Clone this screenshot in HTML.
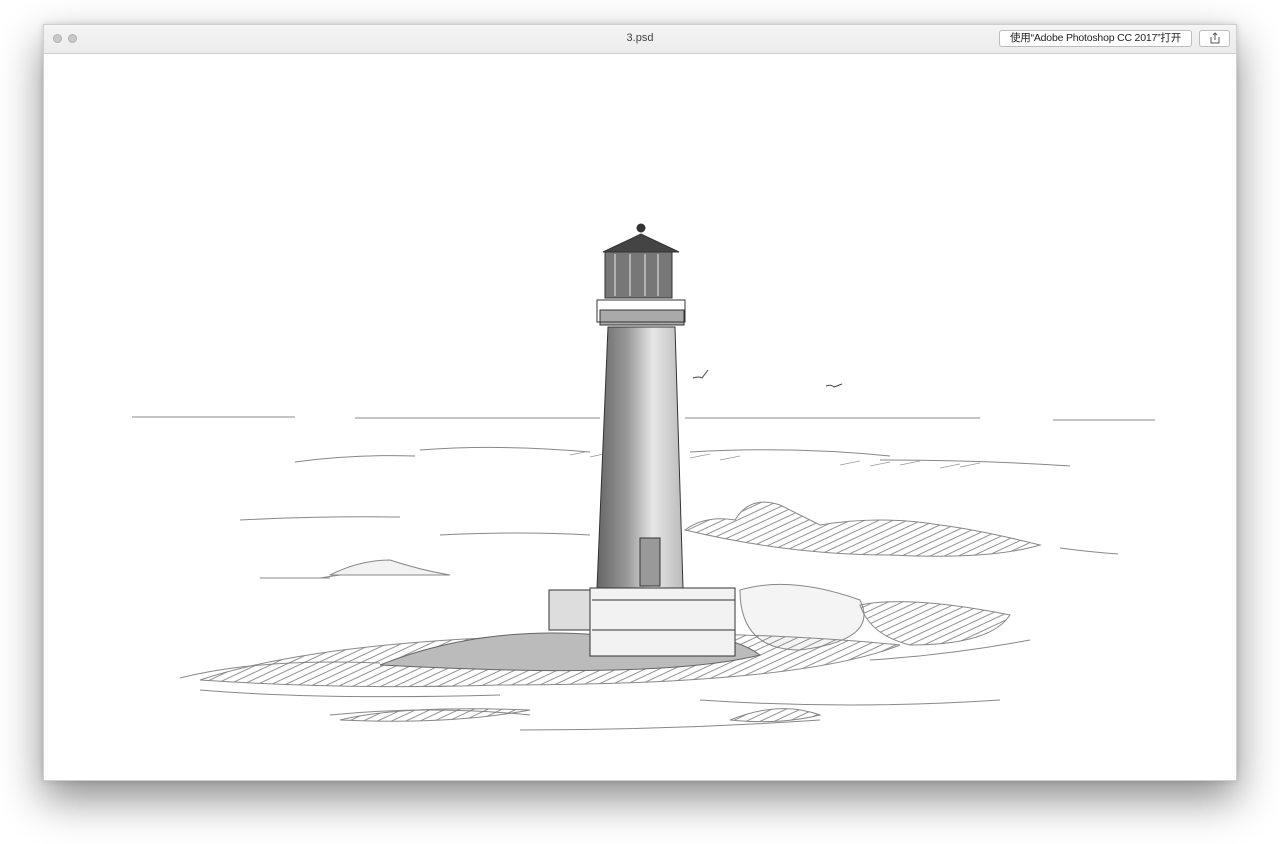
<!DOCTYPE html>
<html><head><meta charset="utf-8"><style>
html,body{margin:0;padding:0;background:#fff;width:1280px;height:844px;overflow:hidden;font-family:"Liberation Sans","Noto Sans CJK SC",sans-serif}
.win{position:absolute;left:43px;top:24px;width:1194px;height:757px;background:#fff;border:1px solid #cfcfcf;box-sizing:border-box;box-shadow:0 18px 40px rgba(0,0,0,0.45),0 0 6px rgba(0,0,0,0.15)}
.tb{position:absolute;left:0;top:0;width:100%;height:28px;background:linear-gradient(#f4f4f4,#ececec);border-bottom:1px solid #cdcdcd}
.btn{position:absolute;top:9px;width:9px;height:9px;border-radius:50%;background:#c9c9c9;border:1px solid #b0b0b0;box-sizing:border-box}
.title{position:absolute;left:0;right:0;top:7px;text-align:center;font-size:11px;color:#444}
.open{position:absolute;left:955px;top:5px;width:193px;height:17px;border:1px solid #bdbdbd;border-radius:3px;background:#fff;font-size:10.5px;line-height:15px;text-align:center;color:#222;box-sizing:border-box;letter-spacing:-0.2px}
.share{position:absolute;left:1155px;top:5px;width:31px;height:17px;border:1px solid #bdbdbd;border-radius:3px;background:#fff;box-sizing:border-box}
</style></head><body>
<div class="win">
<div class="tb">
<div class="btn" style="left:9px"></div><div class="btn" style="left:24px"></div>
<div class="title">3.psd</div>
<div class="open">使用“Adobe Photoshop CC 2017”打开</div>
<div class="share"><svg width="29" height="15"><path d="M11 6v6h8V6M15 2v7M13 4l2-2 2 2" fill="none" stroke="#555" stroke-width="1"/></svg></div>
</div>
</div>
<svg style="position:absolute;left:0;top:0" width="1280" height="844">
<defs>
<linearGradient id="tw" x1="0" x2="1"><stop offset="0" stop-color="#666"/><stop offset="0.35" stop-color="#999"/><stop offset="0.65" stop-color="#e6e6e6"/><stop offset="1" stop-color="#bbb"/></linearGradient>
<pattern id="h" width="6" height="6" patternUnits="userSpaceOnUse" patternTransform="rotate(-25)"><path d="M0 3H6" stroke="#777" stroke-width="0.8"/></pattern>
</defs>
<g stroke="#888" fill="none" stroke-width="1">
<path d="M132 417H295M355 418H600M685 418H980M1053 420H1155"/>
<path d="M295 462q60-8 120-6M420 450q80-6 170 2M690 452q100-6 200 4M880 460q100 0 190 6M240 520q80-4 160-3M440 535q80-4 150 0M320 578q60-10 120-5M260 578H330M1060 548q30 4 58 6"/>
<path d="M180 678q80-20 200-15M200 690q120 10 300 5M330 715q100-10 200 0M520 730q150 0 300-10M700 700q150 10 300 0M870 660q80-5 160-20"/>
</g>
<g stroke="#999" stroke-width="0.8">
<path d="M570 455l15-3M590 457l18-4M690 458l20-4M720 460l20-4M840 465l20-4M870 466l20-4M900 465l20-4M940 468l20-4M960 467l20-4"/>
</g>
<g stroke="#888" stroke-width="1">
<path d="M685 530q20-15 50-10q15-25 45-15q20 10 40 20q60-10 120 0q40 5 100 20q-50 15-150 10q-100 0-205-25z" fill="url(#h)"/>
<path d="M740 590q50-15 120 10q20 40-60 50q-60 0-60-60z" fill="#f4f4f4"/>
<path d="M860 605q50-10 150 10q-20 30-100 30q-40-10-50-40z" fill="url(#h)"/>
<path d="M330 575q30-15 60-15q30 10 60 15z" fill="#f2f2f2"/>
<path d="M200 680q120-40 370-45q180-5 330 10q-100 40-400 40q-150 5-300-5z" fill="url(#h)"/>
<path d="M380 665q100-40 220-30q120-10 160 20q-100 25-380 10z" fill="#bbb" stroke="#666"/>
<path d="M340 720q60-15 190-10q-80 15-190 10zM730 720q50-20 90-5q-40 10-90 5z" fill="url(#h)"/>
</g>
<g stroke="#333" stroke-width="1">
<path d="M597 588L608 327H675L683 588Z" fill="url(#tw)"/>
<rect x="640" y="538" width="20" height="48" fill="#999"/>
<path d="M600 310h84v15h-84z" fill="#aaa"/>
<path d="M597 300h88v22h-88z" fill="none"/>
<rect x="605" y="252" width="67" height="46" fill="#777"/>
<path d="M615 254v42M630 254v42M645 254v42M658 254v42" stroke="#eee"/>
<path d="M603 252l38-18 38 18z" fill="#444"/>
<circle cx="641" cy="228" r="4" fill="#333"/>
<rect x="590" y="588" width="145" height="68" fill="#f2f2f2"/>
<rect x="549" y="590" width="41" height="40" fill="#ddd"/>
<path d="M592 600H735M592 630H735"/>
</g>
<path d="M693 378q6-2 9 0l6-8M826 386q5-2 8 1l8-3" stroke="#444" fill="none"/>
</svg>
</body></html>
